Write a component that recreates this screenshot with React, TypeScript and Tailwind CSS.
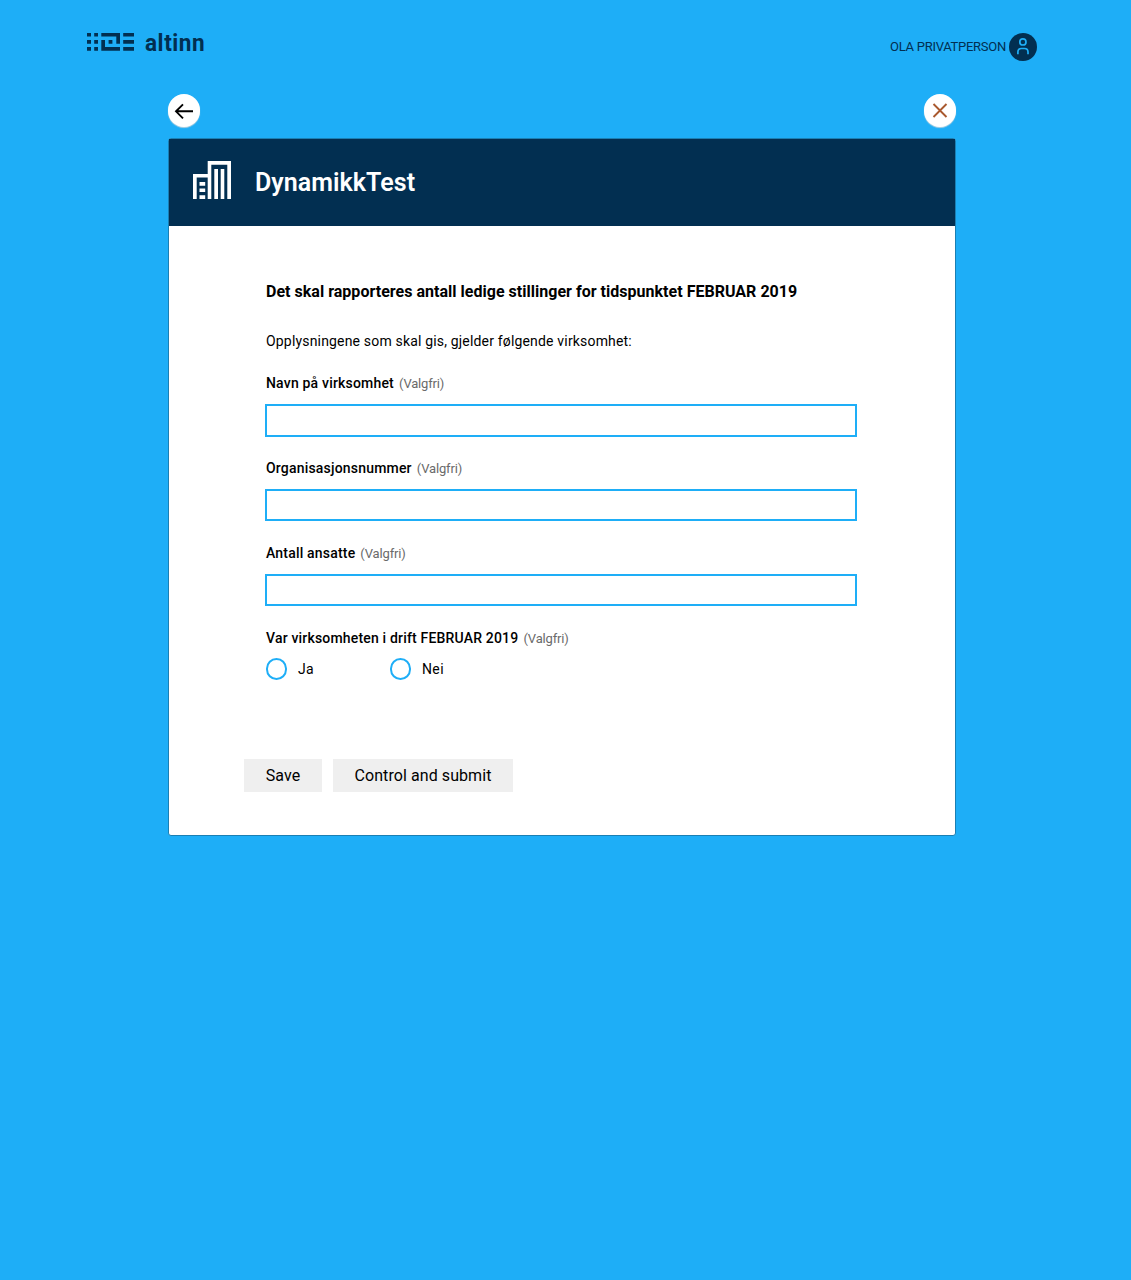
import React from "react";

function AltinnLogo() {
  return (
    <div className="flex text-[#022f51]" aria-label="altinn">
      <svg width="47" height="20" viewBox="0 0 47 20" fill="currentColor">
        <path d="M0 1h4v3.6H0zM7.2 1h3.8v3.6H7.2zM0 8.1h4v3.6H0zM7.2 8.1h3.8v3.6H7.2zM0 15.1h4v3.7H0zM7.2 15.1h3.8v3.7H7.2z" />
        <path d="M14.3 1H33v10.7h-3.7V4.6h-15zM14.3 8.1H18v7h15v3.7H14.3zM21.6 8.1h3.8v3.6h-3.8z" />
        <path d="M36.2 1H47v3.6H36.2zM36.2 8.1H47v3.6H36.2zM36.2 15.1H47v3.7H36.2z" />
      </svg>
      <span className="-mt-1 ml-[11px] h-[30px] origin-left scale-x-[0.92] text-[24.5px] leading-[30px] font-bold tracking-[0.6px]">altinn</span>
    </div>
  );
}

function PersonBadge() {
  return (
    <svg width="28" height="28" viewBox="0 0 28 28" fill="none">
      <circle cx="14" cy="14" r="14" fill="#022f51" />
      <circle cx="13.9" cy="8.9" r="3.1" stroke="#1eaef7" strokeWidth="1.7" />
      <path d="M8.9 21.3v-2.2c0-2.3 1.5-3.6 3.5-3.6h3.1c2 0 3.5 1.3 3.5 3.6v2.2" stroke="#1eaef7" strokeWidth="1.7" />
    </svg>
  );
}

function Optional() {
  return <span className="ml-[5px] text-[13px] font-normal tracking-[-0.16px] text-[#6a6a6a]">(Valgfri)</span>;
}

function Field({ label, tall = false }: { label: string; tall?: boolean }) {
  return (
    <label className="block h-[85px]">
      <span className="block h-[31px] text-[14px] leading-[20px] font-medium tracking-[0.19px]">
        {label}
        <Optional />
      </span>
      <input className={`-ml-px block w-[592px] border-2 border-[#1eaef7] bg-white outline-none ${tall ? "h-[33px]" : "h-8"}`} />
    </label>
  );
}

function Radio({ label }: { label: string }) {
  return (
    <label className="flex w-[124px] items-center text-[14px] tracking-[0.37px]">
      <span className="mr-[11px] h-[22px] w-[21px] rounded-full border-2 border-[#1eaef7]" />
      {label}
    </label>
  );
}

export default function App() {
  return (
    <div className="min-h-screen bg-[#1eaef7] font-['Roboto',sans-serif] text-black">
      <header className="flex h-[94px] items-start justify-between pr-[94px] pl-[87px]">
        <div className="pt-8">
          <AltinnLogo />
        </div>
        <div className="flex items-center gap-[3px] pt-[33px] text-[13px] tracking-[-0.27px] text-[#022f51]">
          <span>OLA PRIVATPERSON</span>
          <PersonBadge />
        </div>
      </header>
      <main className="ml-[168px] w-[788px]">
        <div className="flex h-[44px] justify-between">
          <button aria-label="Tilbake" className="flex h-[33px] w-8 items-center justify-center rounded-full bg-white shadow-[0_1px_1px_rgba(220,220,220,0.8)]">
            <svg width="20" height="16" viewBox="0 0 20 16" fill="none" stroke="#000" strokeWidth="1.9">
              <path d="M19 8.3H2M9 1.3 2 8.3l7 7" />
            </svg>
          </button>
          <button aria-label="Lukk" className="flex h-[33px] w-8 items-center justify-center rounded-full bg-white shadow-[0_1px_1px_rgba(220,220,220,0.8)]">
            <svg width="16" height="16" viewBox="0 0 16 16" fill="none" stroke="#a9592f" strokeWidth="1.9">
              <path d="m1.5 1 13 13m0-13-13 13" />
            </svg>
          </button>
        </div>
        <section className="h-[698px] rounded-[3px] border border-[#1b7fb3] bg-white">
          <div className="flex h-[87px] items-center bg-[#022f51] pl-6 text-white">
            <svg width="38" height="38" viewBox="0 0 38 38" className="-mt-1.5" fill="currentColor">
              <path d="M0 13h14.7V0H38v38h-3.7V3.7h-16V38h-3.6V16.6H3.7V38H0z" />
              <path d="M21.3 8H25v30h-3.7zM27.7 8h3.6v30h-3.6zM6.5 21h5.7v3.7H6.5zM6.5 27.5h5.7V31H6.5zM6.5 34.2h5.7V38H6.5z" />
            </svg>
            <h1 className="ml-6 text-[25px] leading-[30px] font-semibold tracking-[0.04px]">DynamikkTest</h1>
          </div>
          <form className="pt-[55px] pl-[97px]">
            <h2 className="text-[16px] leading-[22px] font-bold tracking-[0.02px]">Det skal rapporteres antall ledige stillinger for tidspunktet FEBRUAR 2019</h2>
            <p className="mt-[28px] text-[14px] leading-[20px] tracking-[0.175px]">Opplysningene som skal gis, gjelder følgende virksomhet:</p>
            <div className="mt-[22px]">
              <Field label="Navn på virksomhet" tall />
              <Field label="Organisasjonsnummer" />
              <Field label="Antall ansatte" />
            </div>
            <p className="text-[14px] leading-[20px] font-medium tracking-[0.18px]">
              Var virksomheten i drift FEBRUAR 2019
              <Optional />
            </p>
            <div className="mt-[9px] flex">
              <Radio label="Ja" />
              <Radio label="Nei" />
            </div>
            <div className="mt-[79px] -ml-[22px] flex gap-[11px] text-[16px] tracking-[0.08px]">
              <button type="button" className="h-[33px] w-[78px] bg-[#efefef]">Save</button>
              <button type="button" className="h-[33px] w-[180px] bg-[#efefef]">Control and submit</button>
            </div>
          </form>
        </section>
      </main>
    </div>
  );
}
